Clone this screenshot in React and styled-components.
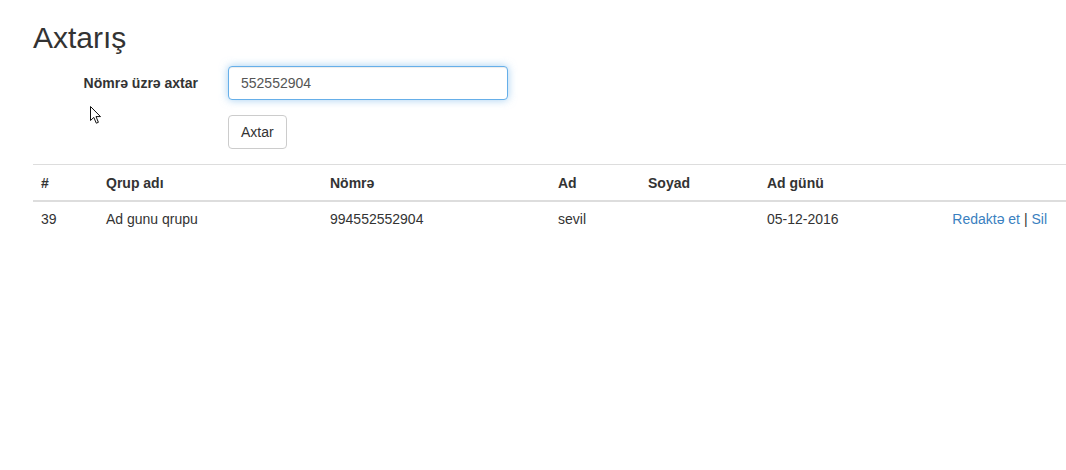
import React, { useState } from 'react'
import styled, { createGlobalStyle } from 'styled-components'

const GlobalStyle = createGlobalStyle`
    html, body {
        margin: 0;
        padding: 0;
        background: #ffffff;
    }
    body {
        font-family: "Liberation Sans", Arial, sans-serif;
        font-size: 14px;
        line-height: 20px;
        color: #333333;
        overflow: hidden;
    }
`

const Page = styled.div`
    position: relative;
    width: 1066px;
    height: 470px;
    padding: 21px 0 0 33px;
    box-sizing: border-box;
`

const Title = styled.h2`
    margin: 0 0 12px;
    font-size: 30px;
    line-height: 33px;
    font-weight: 500;
`

const FormRow = styled.div`
    display: grid;
    grid-template-columns: 180px 280px;
    column-gap: 15px;
    margin-bottom: 15px;
`

const Label = styled.label`
    padding: 7px 15px 0 0;
    text-align: right;
    font-weight: 700;
`

const Input = styled.input`
    box-sizing: border-box;
    width: 280px;
    height: 34px;
    padding: 6px 12px;
    font: inherit;
    color: #555555;
    border: 1px solid #66afe9;
    border-radius: 4px;
    outline: 0;
    box-shadow: inset 0 1px 1px rgba(0,0,0,.075), 0 0 8px rgba(102,175,233,.6);
`

const Button = styled.button`
    box-sizing: border-box;
    height: 34px;
    padding: 6px 12px;
    font: inherit;
    color: #333333;
    background: #ffffff;
    border: 1px solid #cccccc;
    border-radius: 4px;
`

const Table = styled.table`
    width: 1033px;
    border-collapse: collapse;
    border-spacing: 0;
    table-layout: fixed;
    & th, & td {
        padding: 8px;
        text-align: left;
        vertical-align: top;
        border-top: 1px solid #dddddd;
    }
    & th {
        padding-bottom: 7px;
        font-weight: 700;
        border-bottom: 2px solid #dddddd;
    }
    & td {
        padding-top: 7px;
    }
`

const Actions = styled.td`
    && {
        text-align: right;
        padding-right: 19px;
    }
`

const Link = styled.a`
    color: #3a80c0;
    text-decoration: none;
`

const Cursor = styled.svg`
    position: absolute;
    left: 89px;
    top: 105px;
`

const columns = [
    { title: '#', width: 65 },
    { title: 'Qrup adı', width: 224 },
    { title: 'Nömrə', width: 228 },
    { title: 'Ad', width: 90 },
    { title: 'Soyad', width: 119 },
    { title: 'Ad günü', width: 150 },
    { title: '', width: null },
]

const rows = [
    { id: 39, group: 'Ad gunu qrupu', number: '994552552904', name: 'sevil', surname: '', birthday: '05-12-2016' },
]

const App = () => {
    const [query, setQuery] = useState('552552904')

    return (
        <Page>
            <GlobalStyle />
            <Title>Axtarış</Title>

            <form onSubmit={e => e.preventDefault()}>
                <FormRow>
                    <Label>Nömrə üzrə axtar</Label>
                    <Input type="text" value={query} onChange={e => setQuery(e.target.value)} />
                </FormRow>
                <FormRow>
                    <span />
                    <div>
                        <Button type="submit">Axtar</Button>
                    </div>
                </FormRow>
            </form>

            <Table>
                <colgroup>
                    {columns.map((c, i) => <col key={i} style={c.width ? { width: c.width } : null} />)}
                </colgroup>
                <thead>
                    <tr>
                        {columns.map((c, i) => <th key={i}>{c.title}</th>)}
                    </tr>
                </thead>
                <tbody>
                    {rows.map(r => (
                        <tr key={r.id}>
                            <td>{r.id}</td>
                            <td>{r.group}</td>
                            <td>{r.number}</td>
                            <td>{r.name}</td>
                            <td>{r.surname}</td>
                            <td>{r.birthday}</td>
                            <Actions>
                                <Link href="#">Redaktə et</Link> | <Link href="#">Sil</Link>
                            </Actions>
                        </tr>
                    ))}
                </tbody>
            </Table>

            <Cursor width="13" height="20" viewBox="0 0 13 20">
                <path d="M1.5 1.5 L1.5 15.5 L4.8 12.4 L7.3 18.2 L9.4 17.3 L7 11.6 L11.5 11.6 Z"
                    fill="#ffffff" stroke="#111111" strokeWidth="1" strokeLinejoin="miter" />
            </Cursor>
        </Page>
    )
}

export default App
